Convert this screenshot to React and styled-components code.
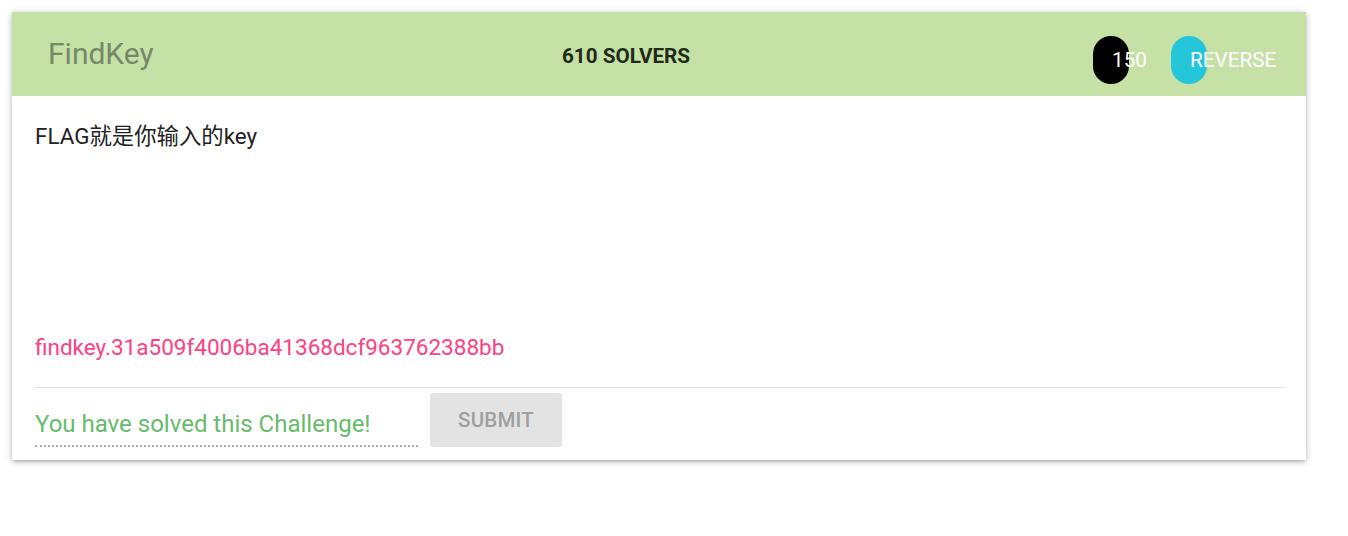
import React from "react";
import styled, { createGlobalStyle } from "styled-components";

const Global = createGlobalStyle`
  html, body { margin: 0; padding: 0; background: #fff; }
  body { font-family: Roboto, "Noto Sans CJK SC", sans-serif; color: rgba(0,0,0,0.87); }
  * { box-sizing: border-box; }
`;

const Page = styled.div`
  padding: 12px;
`;

const Card = styled.div`
  width: 1294px;
  background: #fff;
  box-shadow: 0 2px 4px 0 rgba(0,0,0,0.14), 0 3px 3px -2px rgba(0,0,0,0.12), 0 1px 8px 0 rgba(0,0,0,0.18);
`;

const Header = styled.div`
  height: 84px;
  background: #c5e1a5;
  display: grid;
  grid-template-columns: 514px 1fr auto;
  align-items: center;
  padding: 0 99px 0 36px;
`;

const Title = styled.span`
  font-size: 30px;
  color: #76876a;
  line-height: 36px;
  margin-top: 0;
`;

const Solvers = styled.span`
  font-size: 20.7px;
  font-weight: 700;
  color: #1f2a1a;
  line-height: 24px;
  margin-top: 3px;
`;

const Badges = styled.div`
  display: flex;
  gap: 42px;
  margin-top: 12px;
`;

const Badge = styled.span`
  display: block;
  width: 36px;
  height: 48px;
  border-radius: 18px;
  background: ${(p) => p.$bg};
  color: #fff;
  font-size: 20.7px;
  line-height: 48px;
  padding-left: 19px;
  white-space: nowrap;
  overflow: visible;
`;

const Body = styled.div`
  padding: 24px 22px 13px 23px;
`;

const Description = styled.p`
  margin: 0;
  font-size: 22.4px;
  line-height: 33px;
  color: #222;
  min-height: 211px;
`;

const FileLink = styled.a`
  display: block;
  font-size: 22.5px;
  line-height: 33px;
  color: #ff4081;
  text-decoration: none;
`;

const Divider = styled.hr`
  margin: 23px 0 5px;
  border: 0;
  border-top: 1px solid #dedede;
  height: 0;
`;

const Form = styled.div`
  display: flex;
  align-items: flex-start;
  gap: 12px;
`;

const FlagInput = styled.input`
  width: 383px;
  height: 54px;
  padding: 17px 0 7px 0;
  border: 0;
  border-bottom: 2px dotted rgba(0,0,0,0.32);
  background: transparent;
  font-family: Roboto, sans-serif;
  font-size: 24px;
  line-height: 28px;
  color: #66bb6a;
  outline: none;
  &:disabled { color: #66bb6a; -webkit-text-fill-color: #66bb6a; opacity: 1; }
`;

const SubmitButton = styled.button`
  width: 132px;
  height: 54px;
  border: 0;
  border-radius: 3px;
  background: #e3e3e3;
  color: #9f9f9f;
  font-family: Roboto, sans-serif;
  font-size: 20.5px;
  font-weight: 500;
  letter-spacing: 0.2px;
  padding: 0;
`;

export default function App() {
  return (
    <>
      <Global />
      <Page>
        <Card>
          <Header>
            <Title>FindKey</Title>
            <Solvers>610 SOLVERS</Solvers>
            <Badges>
              <Badge $bg="#000">150</Badge>
              <Badge $bg="#26c6da">REVERSE</Badge>
            </Badges>
          </Header>
          <Body>
            <Description>FLAG就是你输入的key</Description>
            <FileLink href="#">findkey.31a509f4006ba41368dcf963762388bb</FileLink>
            <Divider />
            <Form>
              <FlagInput disabled value="You have solved this Challenge!" readOnly />
              <SubmitButton disabled>SUBMIT</SubmitButton>
            </Form>
          </Body>
        </Card>
      </Page>
    </>
  );
}
